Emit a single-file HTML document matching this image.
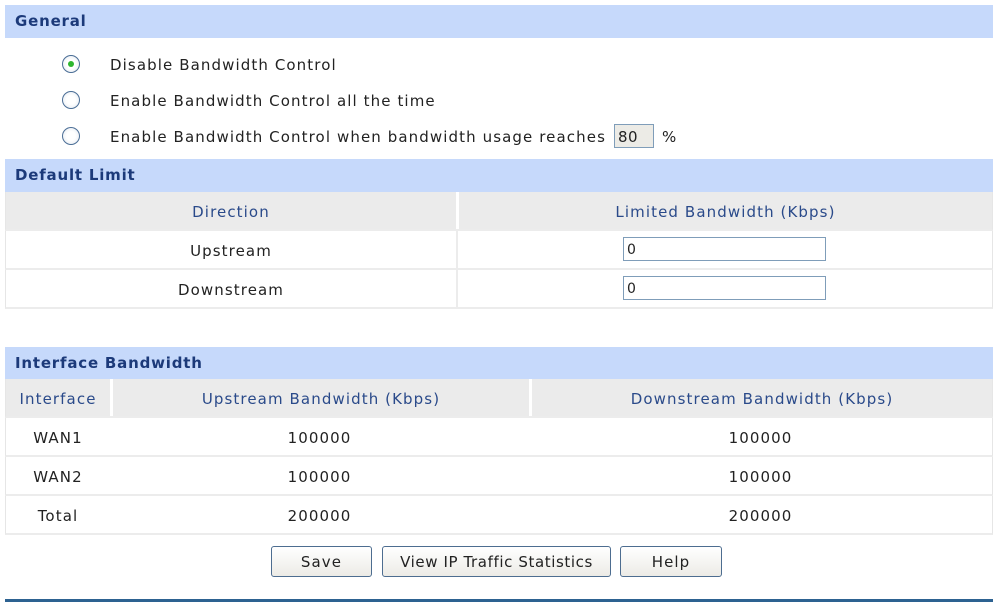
<!DOCTYPE html>
<html><head><meta charset="utf-8"><style>
*{margin:0;padding:0;box-sizing:border-box}
body{width:1000px;height:608px;background:#fff;font-family:"DejaVu Sans",Verdana,sans-serif;font-size:15px;letter-spacing:1.1px;color:#222;position:relative;overflow:hidden}
.a{position:absolute}
.hd{position:absolute;left:5px;width:988px;height:33px;background:#c6d9fb;color:#1c3a7a;font-weight:bold;font-size:15px;letter-spacing:0.8px;line-height:33px;padding-left:10px}
.rad{position:absolute;left:62px;width:18px;height:18px;border-radius:50%;border:1.5px solid #4b6e96;background:radial-gradient(circle,#fff 40%,#dfe6ee 100%)}
.rad.on::after{content:"";position:absolute;left:4.5px;top:4.5px;width:6px;height:6px;border-radius:50%;background:#2eb62e}
.lbl{position:absolute;left:110px;line-height:20px}
.row{position:absolute;left:5px;width:988px;height:39px;border-left:1px solid #e6e6e6;border-right:1px solid #e6e6e6;border-bottom:2px solid #ececec}
.gray{background:#ebebeb;color:#2a4a8a}
.c{position:absolute;top:2px;height:37px;line-height:37px;text-align:center}
.sep{border-left:3px solid #fff}
.inp{position:absolute;height:24px;border:1px solid #7f9db9;background:#fff;font-size:14px;letter-spacing:0.5px;line-height:24px;padding-left:3px;text-align:left}
.btn{position:absolute;top:546px;height:31px;border:1.5px solid #4d6d90;border-radius:3px;background:linear-gradient(#fff,#ecebe6);text-align:center;line-height:31px;font-size:15px}
</style></head><body>
<div class="hd" style="top:5px">General</div>
<div class="rad on" style="top:55px"></div><div class="lbl" style="top:55px">Disable Bandwidth Control</div>
<div class="rad" style="top:91px"></div><div class="lbl" style="top:91px">Enable Bandwidth Control all the time</div>
<div class="rad" style="top:127px"></div><div class="lbl" style="top:127px">Enable Bandwidth Control when bandwidth usage reaches</div>
<div class="inp" style="left:614px;top:124px;width:40px;background:#ecebe6;font-size:15px">80</div>
<div class="lbl" style="left:662px;top:127px">%</div>

<div class="hd" style="top:159px">Default Limit</div>
<div class="row gray" style="top:192px"><div class="c" style="left:0;width:450px">Direction</div><div class="c sep" style="left:450px;top:0;padding-top:2px;width:536px">Limited Bandwidth (Kbps)</div></div>
<div class="row" style="top:231px"><div class="c" style="left:0;width:450px">Upstream</div><div class="c sep" style="left:450px;top:0;width:536px;border-left-color:#ececec;border-left-width:2px"></div></div>
<div class="row" style="top:270px"><div class="c" style="left:0;width:450px">Downstream</div><div class="c sep" style="left:450px;top:0;width:536px;border-left-color:#ececec;border-left-width:2px"></div></div>
<div class="inp" style="left:623px;top:237px;width:203px">0</div>
<div class="inp" style="left:623px;top:276px;width:203px">0</div>

<div class="hd" style="top:347px">Interface Bandwidth</div>
<div class="row gray" style="top:379px"><div class="c" style="left:0;width:104px">Interface</div><div class="c sep" style="left:104px;width:419px;top:0;padding-top:2px">Upstream Bandwidth (Kbps)</div><div class="c sep" style="left:523px;width:463px;top:0;padding-top:2px">Downstream Bandwidth (Kbps)</div></div>
<div class="row" style="top:418px"><div class="c" style="left:0;width:104px">WAN1</div><div class="c" style="left:104px;width:419px">100000</div><div class="c" style="left:523px;width:463px">100000</div></div>
<div class="row" style="top:457px"><div class="c" style="left:0;width:104px">WAN2</div><div class="c" style="left:104px;width:419px">100000</div><div class="c" style="left:523px;width:463px">100000</div></div>
<div class="row" style="top:496px"><div class="c" style="left:0;width:104px">Total</div><div class="c" style="left:104px;width:419px">200000</div><div class="c" style="left:523px;width:463px">200000</div></div>

<div class="btn" style="left:271px;width:101px">Save</div>
<div class="btn" style="left:382px;width:229px;letter-spacing:0.6px">View IP Traffic Statistics</div>
<div class="btn" style="left:620px;width:102px">Help</div>
<div class="a" style="left:5px;top:599px;width:988px;height:3px;background:#2d6291"></div>
</body></html>
